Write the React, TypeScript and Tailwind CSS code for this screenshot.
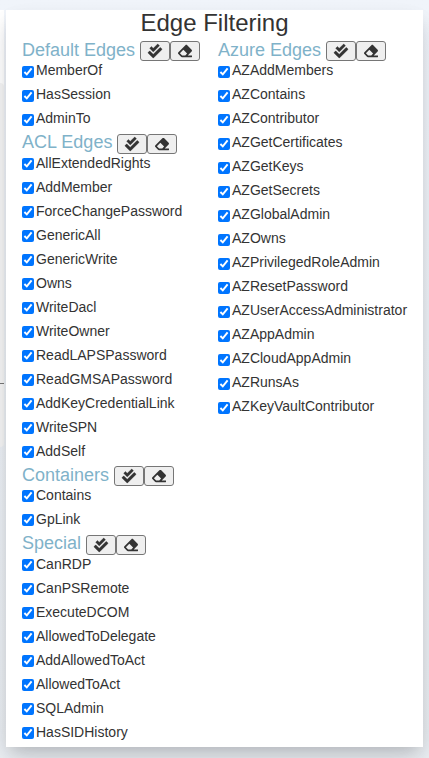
import { FaCheckDouble, FaEraser } from 'react-icons/fa';

type Group = { title: string; edges: string[] };

const leftGroups: Group[] = [
  { title: 'Default Edges', edges: ['MemberOf', 'HasSession', 'AdminTo'] },
  {
    title: 'ACL Edges',
    edges: [
      'AllExtendedRights',
      'AddMember',
      'ForceChangePassword',
      'GenericAll',
      'GenericWrite',
      'Owns',
      'WriteDacl',
      'WriteOwner',
      'ReadLAPSPassword',
      'ReadGMSAPassword',
      'AddKeyCredentialLink',
      'WriteSPN',
      'AddSelf',
    ],
  },
  { title: 'Containers', edges: ['Contains', 'GpLink'] },
  {
    title: 'Special',
    edges: [
      'CanRDP',
      'CanPSRemote',
      'ExecuteDCOM',
      'AllowedToDelegate',
      'AddAllowedToAct',
      'AllowedToAct',
      'SQLAdmin',
      'HasSIDHistory',
    ],
  },
];

const rightGroups: Group[] = [
  {
    title: 'Azure Edges',
    edges: [
      'AZAddMembers',
      'AZContains',
      'AZContributor',
      'AZGetCertificates',
      'AZGetKeys',
      'AZGetSecrets',
      'AZGlobalAdmin',
      'AZOwns',
      'AZPrivilegedRoleAdmin',
      'AZResetPassword',
      'AZUserAccessAdministrator',
      'AZAppAdmin',
      'AZCloudAppAdmin',
      'AZRunsAs',
      'AZKeyVaultContributor',
    ],
  },
];

const buttonClass =
  'mt-[0.45px] flex h-5 w-[30px] items-center justify-center rounded-[3px] border border-[#767676] bg-[#efefef] text-sm text-[#333]';

function EdgeGroup({ title, edges }: Group) {
  return (
    <section>
      <div className="flex h-[20.36px] items-start">
        <h4 className="mr-[5px] text-lg leading-[19.8px] text-[#7fb2c9]">{title}</h4>
        <button className={buttonClass} aria-label="Select all">
          <FaCheckDouble className="overflow-visible stroke-current stroke-[10]" />
        </button>
        <button className={buttonClass} aria-label="Clear all">
          <FaEraser />
        </button>
      </div>
      {edges.map((edge) => (
        <label key={edge} className="flex h-6 items-start pt-[0.11px] text-sm leading-[18px] text-[#333]">
          <input type="checkbox" defaultChecked className="mt-[4.06px] mr-0.5 size-3 shrink-0" />
          {edge}
        </label>
      ))}
    </section>
  );
}

export default function App() {
  return (
    <div className="relative h-[758px] w-[429px] overflow-hidden bg-linear-to-b from-[#f0f4fa] to-[#e9edf1] pt-2.5 pl-1.5 font-['Liberation_Sans',Arial,sans-serif]">
      <div className="absolute top-2.5 left-0 h-[80px] w-1 bg-white" />
      <div className="absolute top-[83px] left-0 h-[364px] w-1 rounded-r-md bg-[#f5f5f5]">
        <div className="mt-[300px] h-px bg-[#777]" />
      </div>
      <main className="relative h-[737px] w-[417px] bg-white shadow-[0_13px_27px_-5px_rgba(30,30,50,0.12),0_8px_16px_-4px_rgba(0,0,0,0.17)]">
        <h3 className="h-[31px] text-center text-2xl leading-[26px] text-[#333]">Edge Filtering</h3>
        <div className="flex pl-4">
          <div className="w-[196px]">
            {leftGroups.map((group) => (
              <EdgeGroup key={group.title} {...group} />
            ))}
          </div>
          <div>
            {rightGroups.map((group) => (
              <EdgeGroup key={group.title} {...group} />
            ))}
          </div>
        </div>
      </main>
    </div>
  );
}
